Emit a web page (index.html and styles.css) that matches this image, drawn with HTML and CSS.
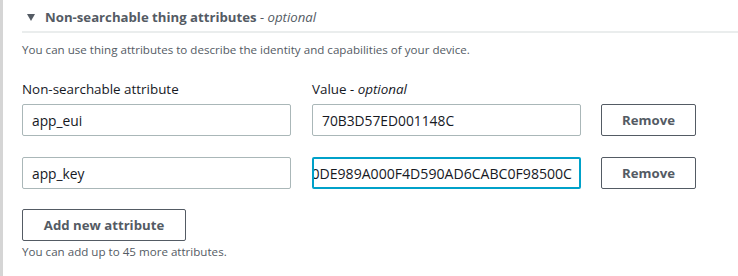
FILE: index.html
```html
<!DOCTYPE html>
<html lang="en">

<head>
  <meta charset="utf-8">
  <title>Thing attributes</title>
  <link rel="stylesheet" href="styles.css">
</head>

<body>

  <div class="panel">
    <div class="section-header">
      <span class="caret"></span>
      <h2 class="section-title">Non-searchable thing attributes <span class="optional">- optional</span></h2>
    </div>

    <div class="section-body">
      <p class="description">You can use thing attributes to describe the identity and capabilities of your device.</p>

      <div class="attr-grid">
        <label class="field-label">Non-searchable attribute</label>
        <label class="field-label">Value <span class="optional">- optional</span></label>
        <span></span>

        <input class="text-input" type="text" value="app_eui">
        <input class="text-input" type="text" value="70B3D57ED001148C">
        <button class="btn">Remove</button>

        <input class="text-input" type="text" value="app_key">
        <div class="text-input focused"><span class="scrolled">A0DE989A000F4D590AD6CABC0F98500C</span></div>
        <button class="btn">Remove</button>
      </div>

      <button class="btn btn-add">Add new attribute</button>
      <p class="hint">You can add up to 45 more attributes.</p>
    </div>
  </div>

</body>

</html>
```

FILE: styles.css
```css
body {
  margin: 0;
  background: #fff;
  font-family: "Open Sans", "Noto Sans", sans-serif;
  color: #16191f;
}

.panel {
  border-left: 3px solid #d5d5d5;
  height: 276px;
  box-sizing: border-box;
  padding-left: 19px;
}

.section-header {
  display: flex;
  align-items: center;
  height: 33px;
  padding: 3px 0 0 5px;
  border-bottom: 2px solid #eaeded;
  box-sizing: border-box;
}

.caret {
  width: 0;
  height: 0;
  border-left: 4px solid transparent;
  border-right: 4px solid transparent;
  border-top: 7px solid #545b64;
  margin-right: 10px;
}

.section-title {
  margin: 0;
  font-size: 13.2px;
  font-weight: 700;
  color: #545b64;
}

.optional {
  font-style: italic;
  font-weight: 400;
}

.description {
  margin: 9px 0 0;
  font-size: 11.6px;
  line-height: 16px;
  color: #545b64;
}

.attr-grid {
  display: grid;
  grid-template-columns: 269px 269px 94px;
  column-gap: 21px;
  margin-top: 21px;
}

.field-label {
  font-size: 13.4px;
  line-height: 20px;
  color: #16191f;
  padding-bottom: 5px;
}

.text-input {
  box-sizing: border-box;
  height: 32px;
  margin-bottom: 21px;
  border: 1px solid #aab7b8;
  border-radius: 2px;
  padding: 0 9px;
  font-family: inherit;
  font-size: 13.8px;
  color: #16191f;
  background: #fff;
  outline: none;
}

.text-input.focused {
  border: 2px solid #00a1c9;
  padding: 0 7px;
  display: flex;
  align-items: center;
  justify-content: flex-end;
  overflow: hidden;
  white-space: nowrap;
  font-size: 14.1px;
}

.scrolled {
  flex-shrink: 0;
}

.btn {
  box-sizing: border-box;
  height: 32px;
  border: 1px solid #545b64;
  border-radius: 2px;
  background: #fff;
  font-family: inherit;
  font-size: 13.2px;
  font-weight: 700;
  color: #545b64;
  padding: 0 20px;
  margin-left: -1px;
  white-space: nowrap;
}

.btn-add {
  display: block;
  width: 164px;
  margin: -1px 0 0;
}

.hint {
  margin: 3px 0 0;
  font-size: 11.6px;
  line-height: 16px;
  color: #545b64;
}
```
